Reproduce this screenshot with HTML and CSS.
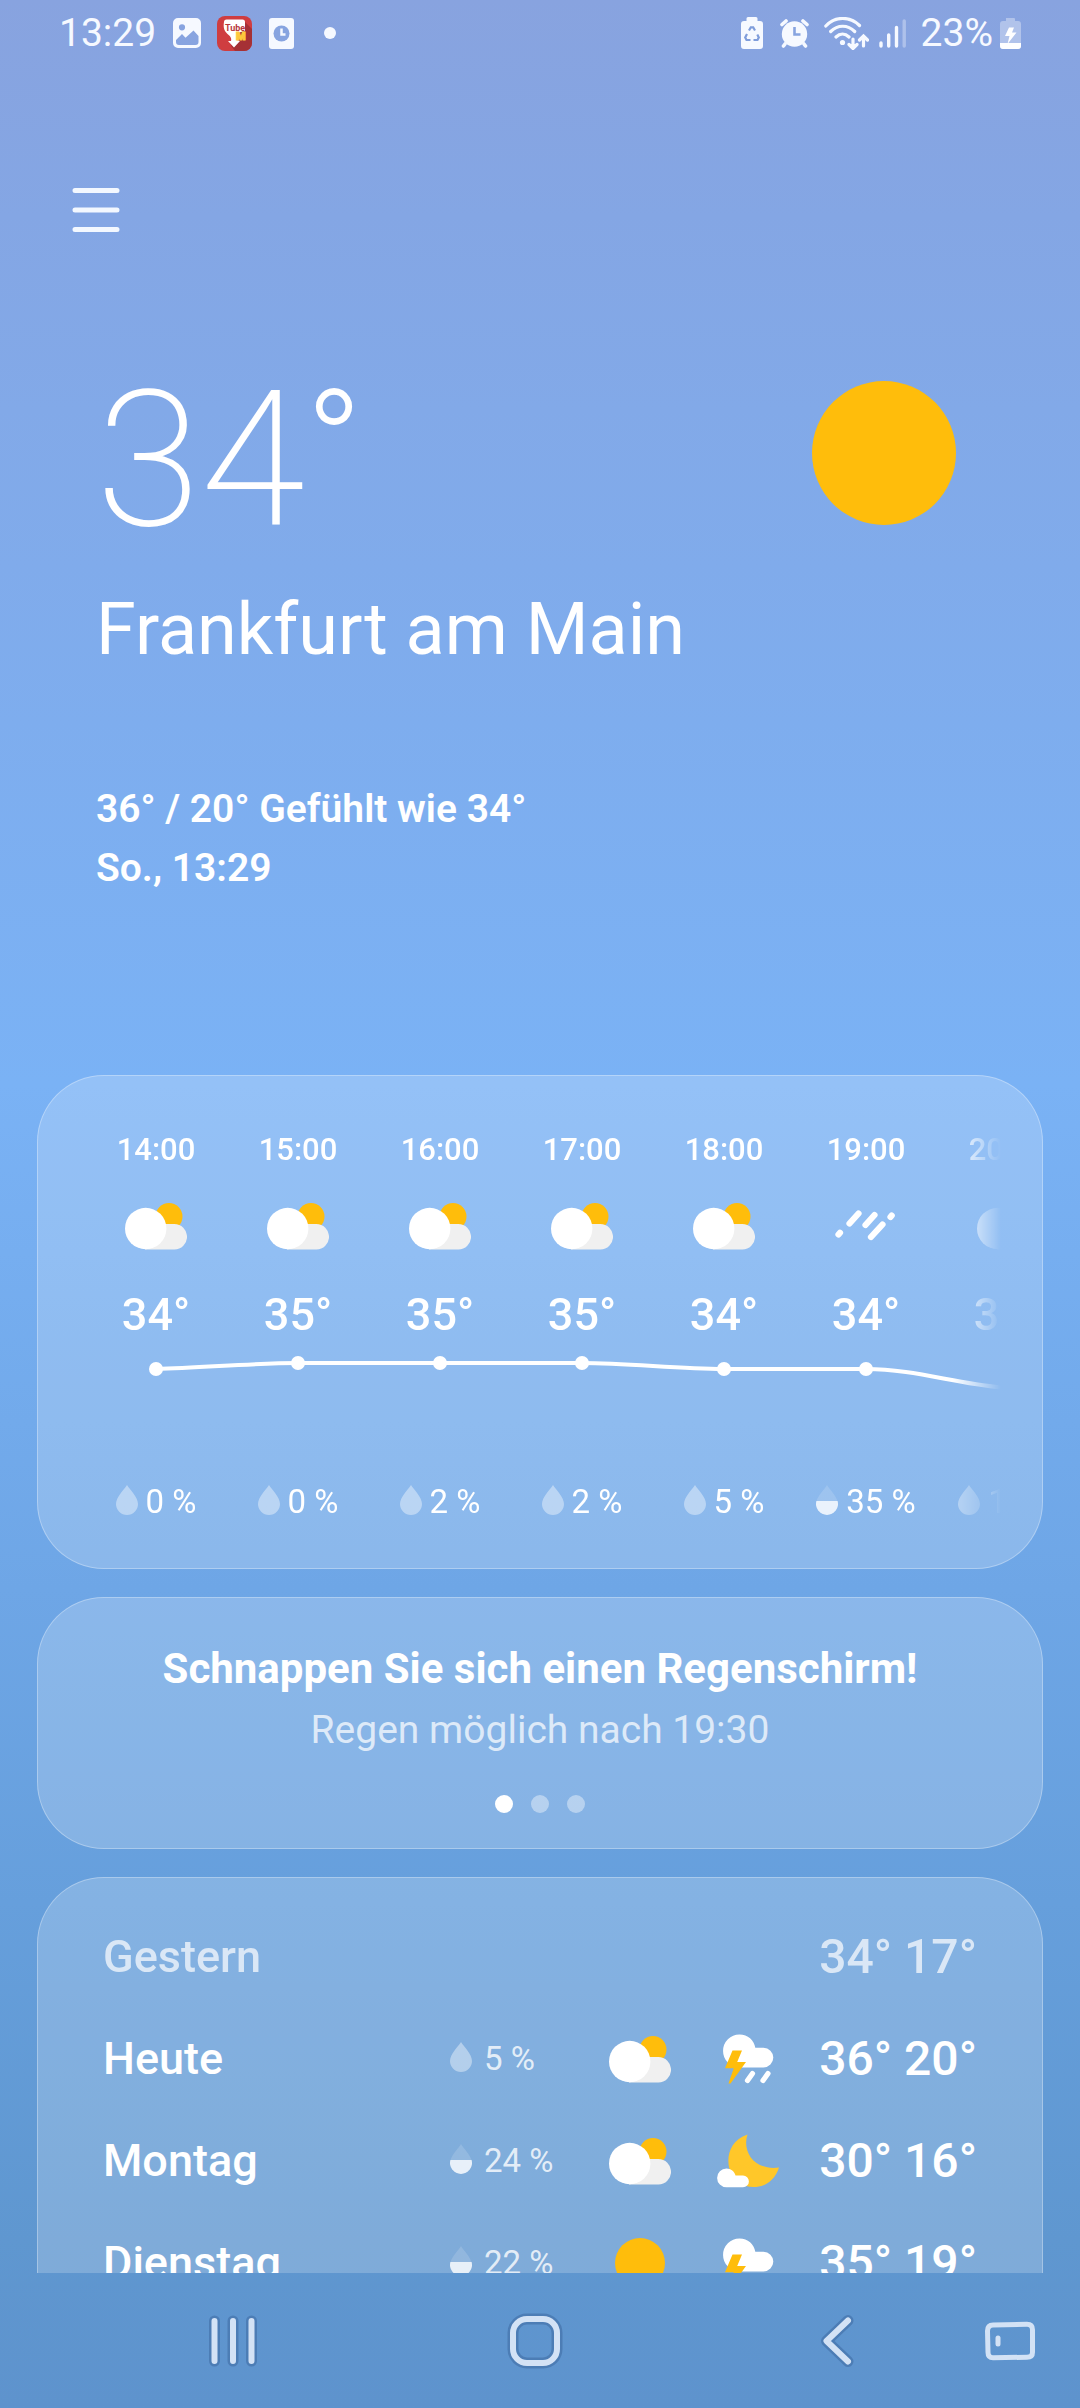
FILE: index.html
```html
<!DOCTYPE html>
<html lang="de">
<head>
<meta charset="utf-8">
<meta name="viewport" content="width=device-width, initial-scale=1">
<title>Wetter – Frankfurt am Main</title>
<link rel="stylesheet" href="styles.css">
</head>
<body>
<svg class="sprite" aria-hidden="true">
  <symbol id="partly" viewBox="0 0 62 48">
    <circle cx="44" cy="14.500" r="13.500" fill="#ffbd0b"/>
    <path d="M20 47.500V22h29.300a12.750 12.750 0 0 1 0 25.500z" fill="#f0f0f0"/>
    <circle cx="20.700" cy="26.500" r="20.700" fill="#fff"/>
  </symbol>
  <symbol id="sleet" viewBox="0 0 62 48">
    <g stroke="#fff" stroke-width="6.200" stroke-linecap="round">
      <path d="M3.500 32.500l1.500-1.700M14.500 21.500L23.500 11.500M30.500 23L39.500 13M36 35l11.500-12.500M55.500 15l1.200-1.400"/>
    </g>
  </symbol>
  <symbol id="storm" viewBox="0 0 62 52">
    <path d="M22.500 1.500c8.500 0 14.500 5.800 15.800 13.300h8.200a9.800 9.800 0 0 1 0 19.600H22.500a16.450 16.450 0 0 1 0-32.900z" fill="#fff"/>
    <path d="M15.500 17.500h9.500l-4.800 11.500h8.800L13.500 50.500h-2l5.200-15.200H8z" fill="#ffbd0b"/>
    <path d="M35.500 40.500l-5 7M51 40.500l-5 7" stroke="#fff" stroke-width="5.200" stroke-linecap="round"/>
  </symbol>
  <symbol id="moon" viewBox="0 0 62 54">
    <path d="M30.500 0.500C25 16 36 37 62 33.500C56 53 36 57.500 22 49C8 40 5 9 30.500 0.500z" fill="#ffc729"/>
    <path d="M9.500 34.500c4.500 0 8 3 9 7H26a5.900 5.900 0 0 1 0 11.800H9.500a9.400 9.400 0 0 1 0-18.800z" fill="#fff"/>
  </symbol>
  <symbol id="sun" viewBox="0 0 50 50"><circle cx="25" cy="25" r="25" fill="#ffbd0b"/></symbol>
  <symbol id="drop" viewBox="0 0 22 34">
    <path d="M11 0c3 5 11 12 11 19a11 11 0 0 1-22 0C0 12 8 5 11 0z" fill="#fff" fill-opacity=".4"/>
  </symbol>
  <symbol id="drop-half" viewBox="0 0 22 34">
    <path d="M11 0c2.500 4.500 8.500 9.500 10.500 16H.5C2.500 9.500 8.500 4.500 11 0z" fill="#fff" fill-opacity=".15"/>
    <path d="M.4 16h21.200a11 11 0 1 1-21.200 0z" fill="#fff" fill-opacity=".82"/>
  </symbol>
</svg>

<div class="app">
  <header class="status">
    <div class="status-group">
      <time class="status-text">13:29</time>
      <svg class="s-image" viewBox="0 0 28 30"><path fill="#f6f9ff" fill-rule="evenodd" d="M5 0h18a5 5 0 0 1 5 5v20a5 5 0 0 1-5 5H5a5 5 0 0 1-5-5V5a5 5 0 0 1 5-5zM9 6.200a3 3 0 1 0 0 6.200a3 3 0 1 0 0-6.200zM3 22l6-6 3.500 3.700L20.500 12.500 25.500 18v6a3 3 0 0 1-3 3h-16.500a3 3 0 0 1-3-3z"/></svg>
      <svg class="s-tube" viewBox="0 0 35 35">
        <rect width="35" height="35" rx="8" fill="#cf3d40"/>
        <path d="M27 5l8 8v14a8 8 0 0 1-8 8H18l-4-5z" fill="#a53135"/>
        <path d="M7 6q0-2.500 2.500-2.500h16Q28 3.500 28 6v9l-8 2v7l3 1-6 6.500-6-6.500h3c1-3-1-5-3.500-7C7.500 15 6 12 7 6z" fill="#fff"/>
        <text class="tube-text" x="8" y="15">Tube</text>
        <text class="tube-m" x="19" y="24">M</text>
      </svg>
      <svg class="s-clock" viewBox="0 0 25 31"><rect width="25" height="31" rx="3" fill="#f6f9ff"/><circle cx="12.500" cy="15.500" r="8" fill="#87a4e0"/><path d="M12.500 10.500v6h4" fill="none" stroke="#f6f9ff" stroke-width="2.500"/></svg>
      <span class="s-dot"></span>
    </div>
    <div class="status-group status-right">
      <svg class="s-batt" viewBox="0 0 22 32"><path fill="#f6f9ff" d="M7 0h8a1.500 1.500 0 0 1 1.500 1.500V4H19a3 3 0 0 1 3 3v22a3 3 0 0 1-3 3H3a3 3 0 0 1-3-3V7a3 3 0 0 1 3-3h2.500V1.500A1.500 1.500 0 0 1 7 0z"/><path d="M8 13.500l1.800-3.200h2.400L14 13.500M16.300 17.500l1.500 3-1.300 2.500H12.500M9.500 23H5.500l-1.300-2.500 1.800-3.500" fill="none" stroke="#7f9ddb" stroke-width="2.200"/></svg>
      <svg class="s-alarm" viewBox="0 0 29 29"><circle cx="14.500" cy="15" r="12.700" fill="#f6f9ff"/><path d="M2 5.500L6 2M27 5.500L23 2M5 25l-1.500 2M24 25l1.500 2" stroke="#f6f9ff" stroke-width="3.600" stroke-linecap="round"/><path d="M14.500 8v7.500h6" fill="none" stroke="#87a4e0" stroke-width="2.600"/></svg>
      <svg class="s-wifi" viewBox="0 0 45 33"><g fill="none" stroke="#f6f9ff" stroke-width="3.200" stroke-linecap="round"><path d="M1.800 9C11-1 26-1 35.500 8.500M6.700 14.500c7-7 17-7 24 0M12 20c4-3.800 9-3.800 13 0M29 22v9m-4-3.500l4 4 4-4M39.500 29v-9m-4 3l4-4 4 4"/></g><circle cx="18.500" cy="25.500" r="2.600" fill="#f6f9ff"/></svg>
      <svg class="s-signal" viewBox="0 0 27 29"><g stroke="#f6f9ff" stroke-width="3.400" stroke-linecap="round"><path d="M2 24v3M9.700 16v11M17.500 8.500V27"/><path d="M25.200 2v25" stroke-opacity=".35"/></g></svg>
      <span class="status-text">23%</span>
      <svg class="s-charge" viewBox="0 0 21 32"><path fill="#fff" fill-opacity=".35" d="M6 1h8a1 1 0 0 1 1 1v2h3a3 3 0 0 1 3 3v22a3 3 0 0 1-3 3H3a3 3 0 0 1-3-3V7a3 3 0 0 1 3-3h3z"/><path fill="#fff" d="M0 26h21v3a3 3 0 0 1-3 3H3a3 3 0 0 1-3-3zM9 10.500h5l-2 5h4.500L7.500 27l2-8H5z"/></svg>
    </div>
  </header>

  <main class="content">
    <div class="toolbar">
      <button class="menu" aria-label="Menü"><svg viewBox="0 0 48 46"><path d="M3 3.500h42M3 23h42M3 42.500h42" stroke="#f3f8ff" stroke-width="5" stroke-linecap="round"/></svg></button>
    </div>

    <section class="hero">
      <div>
        <p class="now">34<span class="now-unit">°</span></p>
        <h1 class="city">Frankfurt am Main</h1>
        <p class="summary">36° / 20° Gefühlt wie 34°<br>So., 13:29</p>
      </div>
      <svg class="hero-sun"><use href="#sun"/></svg>
    </section>

    <section class="card hourly" aria-label="Stündlich">
      <div class="hours-view">
        <ul class="hours">
          <li><span class="hour">14:00</span><svg class="icon"><use href="#partly"/></svg><span class="deg">34°</span></li>
          <li><span class="hour">15:00</span><svg class="icon"><use href="#partly"/></svg><span class="deg">35°</span></li>
          <li><span class="hour">16:00</span><svg class="icon"><use href="#partly"/></svg><span class="deg">35°</span></li>
          <li><span class="hour">17:00</span><svg class="icon"><use href="#partly"/></svg><span class="deg">35°</span></li>
          <li><span class="hour">18:00</span><svg class="icon"><use href="#partly"/></svg><span class="deg">34°</span></li>
          <li><span class="hour">19:00</span><svg class="icon"><use href="#sleet"/></svg><span class="deg">34°</span></li>
          <li><span class="hour">20:00</span><svg class="icon"><use href="#partly"/></svg><span class="deg">31°</span></li>
        </ul>
        <svg class="chart" viewBox="0 0 994 64">
          <path d="M71 26C118 25 166 20 213 20H497C544 20 592 26 639 26H781C830 26 875 42 923 45" fill="none" stroke="#fff" stroke-width="4"/>
          <g fill="#fff"><circle cx="71" cy="26" r="7"/><circle cx="213" cy="20" r="7"/><circle cx="355" cy="20" r="7"/><circle cx="497" cy="20" r="7"/><circle cx="639" cy="26" r="7"/><circle cx="781" cy="26" r="7"/><circle cx="923" cy="45" r="7"/></g>
        </svg>
        <ul class="hours rain">
          <li><svg class="drop"><use href="#drop"/></svg>0 %</li>
          <li><svg class="drop"><use href="#drop"/></svg>0 %</li>
          <li><svg class="drop"><use href="#drop"/></svg>2 %</li>
          <li><svg class="drop"><use href="#drop"/></svg>2 %</li>
          <li><svg class="drop"><use href="#drop"/></svg>5 %</li>
          <li><svg class="drop"><use href="#drop-half"/></svg>35 %</li>
          <li><svg class="drop"><use href="#drop"/></svg>19 %</li>
        </ul>
      </div>
    </section>

    <section class="card tip">
      <h2 class="tip-title">Schnappen Sie sich einen Regenschirm!</h2>
      <p class="tip-text">Regen möglich nach 19:30</p>
      <div class="pager">
        <button class="page is-active" aria-label="Hinweis 1"></button>
        <button class="page" aria-label="Hinweis 2"></button>
        <button class="page" aria-label="Hinweis 3"></button>
      </div>
    </section>

    <section class="card daily" aria-label="Täglich">
      <table class="days">
        <colgroup><col class="c-day"><col class="c-rain"><col class="c-icon"><col class="c-icon"><col></colgroup>
        <tbody>
          <tr class="past"><th scope="row">Gestern</th><td></td><td></td><td></td><td class="range">34° 17°</td></tr>
          <tr><th scope="row">Heute</th><td><span class="chance"><svg class="drop"><use href="#drop"/></svg>5 %</span></td><td><svg class="icon"><use href="#partly"/></svg></td><td><svg class="icon-tall"><use href="#storm"/></svg></td><td class="range">36° 20°</td></tr>
          <tr><th scope="row">Montag</th><td><span class="chance"><svg class="drop"><use href="#drop-half"/></svg>24 %</span></td><td><svg class="icon"><use href="#partly"/></svg></td><td><svg class="icon-tall"><use href="#moon"/></svg></td><td class="range">30° 16°</td></tr>
          <tr><th scope="row">Dienstag</th><td><span class="chance"><svg class="drop"><use href="#drop-half"/></svg>22 %</span></td><td><svg class="icon-sun"><use href="#sun"/></svg></td><td><svg class="icon-tall"><use href="#storm"/></svg></td><td class="range">35° 19°</td></tr>
        </tbody>
      </table>
    </section>
  </main>

  <nav class="navbar">
    <button class="nav-main" aria-label="Letzte Apps"><svg viewBox="0 0 60 60"><path class="shade" d="M11.500 10v40M30 10v40M48.500 10v40"/><path class="line" d="M11.500 10v40M30 10v40M48.500 10v40"/></svg></button>
    <button class="nav-main" aria-label="Startseite"><svg viewBox="0 0 60 60"><rect class="shade" x="8" y="8" width="44" height="44" rx="14"/><rect class="line" x="8" y="8" width="44" height="44" rx="14"/></svg></button>
    <button class="nav-main" aria-label="Zurück"><svg viewBox="0 0 60 60"><path class="shade" d="M41 9.500L19.500 30 41 50.500"/><path class="line" d="M41 9.500L19.500 30 41 50.500"/></svg></button>
    <button class="nav-side" aria-label="Tastatur"><svg viewBox="0 0 60 60"><path class="line thin" d="M13 14l34-.7q5.500 0 5.500 5.500v22.400q0 5-5.500 5l-34 .6q-5 0-5-5.500L7.500 20q0-6 5.500-6z"/><path class="line thin" d="M18 27v6"/></svg></button>
  </nav>
</div>
</body>
</html>
```
FILE: styles.css
```css
* { box-sizing: border-box; margin: 0; padding: 0; }

body {
  font-family: Roboto, "Noto Sans", sans-serif;
  color: #fff;
}

ul { list-style: none; }
svg { display: block; flex: none; }
button { background: none; border: 0; color: inherit; cursor: pointer; }
.sprite { position: absolute; width: 0; height: 0; }

.app {
  display: flex;
  flex-direction: column;
  height: 100vh;
  background: linear-gradient(#88a3df 0%, #84a6e4 9%, #82a9e8 17%, #7eadee 30%, #7ab2f5 45%, #6ea6e6 66%, #669fdc 79%, #5f97d0 93%, #5e93cd 100%);
}

/* Status bar */
.status {
  display: flex;
  justify-content: space-between;
  align-items: center;
  height: 66px;
  padding: 0 59px;
  flex: none;
}
.status-group { display: flex; align-items: center; }
.status-text { font-size: 39px; line-height: 48px; color: #f6f9ff; }
.s-image { width: 28px; height: 30px; margin-left: 17px; }
.s-tube { width: 35px; height: 35px; margin-left: 16px; }
.s-clock { width: 25px; height: 31px; margin-left: 17px; }
.s-dot { width: 12px; height: 12px; margin-left: 30px; border-radius: 50%; background: #f6f9ff; }
.tube-text { font-size: 9px; font-weight: 700; fill: #b8383c; }
.tube-m { font-size: 11px; font-weight: 900; fill: #ffc93c; stroke: #ffc93c; stroke-width: 1px; }
.s-batt { width: 22px; height: 32px; }
.s-alarm { width: 29px; height: 29px; margin-left: 17px; }
.s-wifi { width: 45px; height: 33px; margin-left: 15px; }
.s-signal { width: 27px; height: 29px; margin: 0 15px 0 10px; }
.s-charge { width: 21px; height: 32px; margin-left: 7px; }

/* Scrolling content */
.content {
  flex: 1;
  min-height: 0;
  overflow-y: auto;
  scrollbar-width: none;
  padding: 96px 37px 0;
}
.toolbar { padding: 0 11px; }
.menu { display: grid; place-items: center; width: 96px; height: 96px; }
.menu svg { width: 48px; height: 46px; }

.hero {
  display: flex;
  justify-content: space-between;
  align-items: flex-start;
  padding: 106px 87px 177px 59px;
}
.now { display: flex; align-items: flex-start; font-size: 190px; line-height: 192px; font-weight: 200; }
.now-unit { font-size: 152px; line-height: 164px; font-weight: 300; }
.city { margin-top: 32px; font-size: 72px; line-height: 84px; font-weight: 400; }
.summary { margin-top: 108px; font-size: 39px; line-height: 59px; font-weight: 600; }
.hero-sun { width: 144px; height: 144px; margin-top: 17px; }

.card {
  margin-bottom: 28px;
  border: 1px solid rgba(255, 255, 255, .3);
  border-radius: 67px;
  background: rgba(255, 255, 255, .2);
}

/* Hourly forecast */
.hourly { padding: 54px 41px 46px 47px; }
.hours-view {
  overflow: hidden;
  mask-image: linear-gradient(to left, transparent, #000 48px);
}
.hours { display: grid; grid-auto-flow: column; grid-auto-columns: 142px; }
.hours li { display: flex; flex-direction: column; align-items: center; }
.hour { font-size: 31px; line-height: 40px; font-weight: 500; }
.icon { width: 62px; height: 48px; }
.hours .icon { margin: 32px 0 37px; }
.deg { font-size: 45px; line-height: 56px; font-weight: 500; }
.chart { width: 994px; height: 64px; margin-bottom: 75px; }
.rain { font-size: 33px; line-height: 40px; }
.rain li { flex-direction: row; justify-content: center; gap: 8px; }
.drop { width: 22px; height: 34px; }

/* Advice */
.tip { padding: 45px 40px 35px; text-align: center; }
.tip-title { font-size: 42px; line-height: 52px; font-weight: 700; }
.tip-text { margin-top: 9px; font-size: 39px; line-height: 52px; color: rgba(255, 255, 255, .72); }
.pager { display: flex; justify-content: center; gap: 18px; margin-top: 39px; }
.page { width: 18px; height: 18px; border-radius: 50%; background: rgba(255, 255, 255, .4); }
.page.is-active { background: #fff; }

/* Daily forecast */
.daily { padding: 28px 65px; }
.days { width: 100%; table-layout: fixed; border-collapse: collapse; }
.c-day { width: 347px; }
.c-rain { width: 136px; }
.c-icon { width: 108px; }
.days tr { height: 102px; }
.days th { text-align: left; font-size: 45px; line-height: 56px; font-weight: 500; }
.days .range { text-align: right; font-size: 48px; line-height: 56px; font-weight: 500; white-space: nowrap; }
.past { opacity: .7; }
.chance { display: flex; align-items: center; gap: 12px; font-size: 33px; line-height: 40px; color: rgba(255, 255, 255, .8); }
.days td > svg { margin: 0 auto; }
.icon-tall { width: 62px; height: 54px; }
.icon-sun { width: 50px; height: 50px; }

/* System navigation */
.navbar {
  display: flex;
  align-items: center;
  flex: none;
  height: 135px;
  padding: 0 48px 0 82px;
}
.navbar button { display: grid; place-content: center; height: 100%; }
.navbar svg { width: 60px; height: 60px; }
.nav-main { flex: 1; }
.nav-side { width: 44px; }
.line, .shade { fill: none; stroke-linecap: round; stroke-linejoin: round; }
.line { stroke: #d3e2f5; stroke-width: 6px; }
.shade { stroke: rgba(50, 90, 145, .4); stroke-width: 11px; }
.thin { stroke-width: 5px; }
```
